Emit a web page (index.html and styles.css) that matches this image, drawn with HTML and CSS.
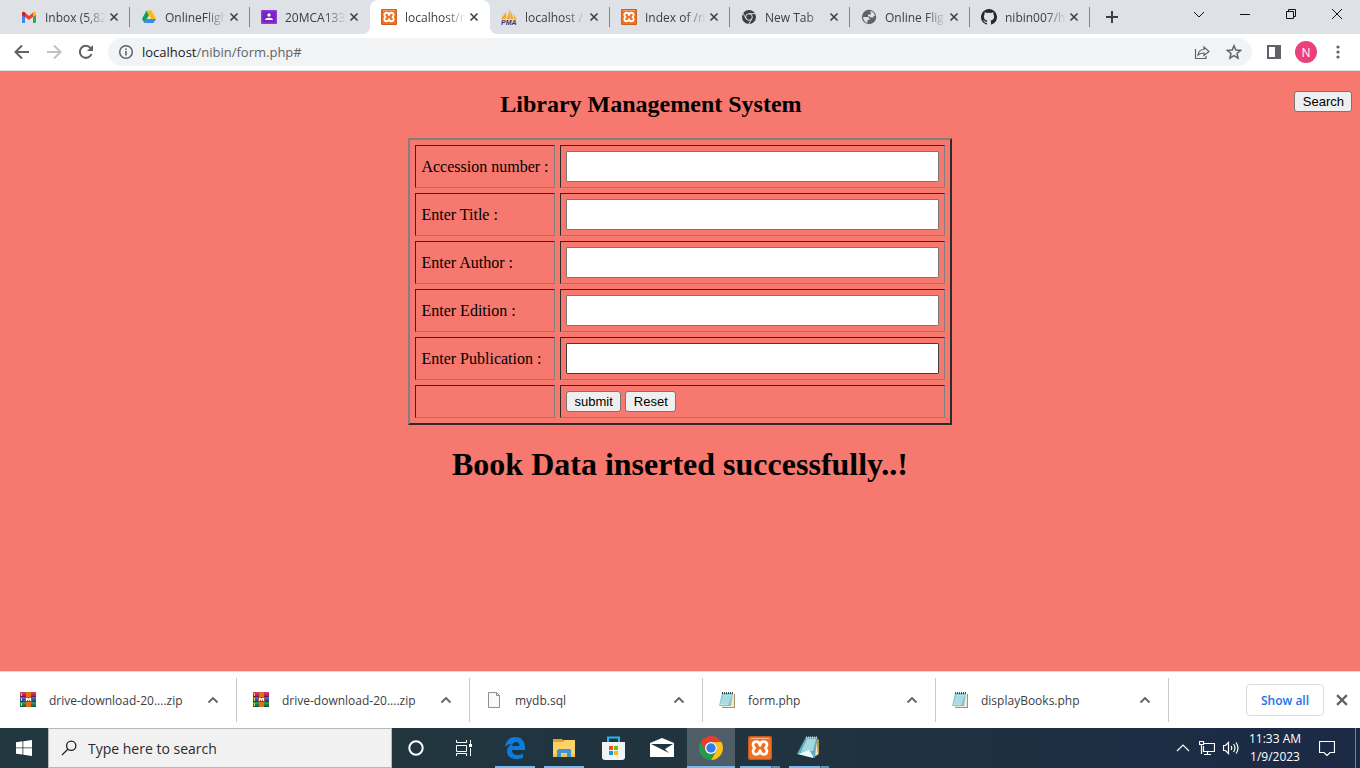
FILE: index.html
```html
<!DOCTYPE html>
<html lang="en">
<head>
<meta charset="utf-8">
<meta name="viewport" content="width=device-width, initial-scale=1">
<title>Library Management System</title>
<link rel="stylesheet" href="styles.css">
</head>
<body>
<svg class="sprite" aria-hidden="true">
  <symbol id="close" viewBox="0 0 10 10"><path d="M1.5 1.5l7 7m0-7l-7 7" fill="none" stroke="currentColor" stroke-width="1.6"/></symbol>
  <symbol id="up" viewBox="0 0 12 12"><path d="M1.5 8.500L6 4l4.500 4.500" fill="none" stroke="currentColor" stroke-width="1.800"/></symbol>
  <symbol id="xampp" viewBox="0 0 24 24">
    <rect width="24" height="24" rx="2" fill="#c9581a"/><rect x="1" y="1" width="22" height="22" rx="2" fill="#f07022"/><path d="M3 2h18v1H3z" fill="#f9b283"/>
    <path d="M12 9.300C11.500 4.500 5 4.500 5 8.800c0 1.400.7 2.400 1.700 3.200C5.700 12.800 5 13.800 5 15.200c0 4.300 6.500 4.300 7-.5.500 4.800 7 4.800 7 .5 0-1.400-.7-2.400-1.700-3.200 1-.8 1.700-1.800 1.700-3.200 0-4.300-6.500-4.300-7 .5z" fill="none" stroke="#fff" stroke-width="2.700" stroke-linejoin="round"/>
  </symbol>
  <symbol id="zip" viewBox="0 0 16 16">
    <path fill="#b8234f" d="M0 0h16v5H0z"/><path fill="#4745a8" d="M0 5h16v5H0z"/><path fill="#16803b" d="M0 10h16v5H0z"/>
    <path d="M0 1h16" stroke="#e0507a"/><path d="M0 6h16" stroke="#7777d0"/><path d="M0 11h16" stroke="#36b25b"/><path d="M0 4.500h16M0 9.500h16M0 14.500h16" stroke="#252540" stroke-width=".6"/>
    <path fill="#f1c644" d="M1 1h1v3H1zm0 5h1v3H1zm0 5h1v3H1z"/><path fill="#e46c1b" d="M6 0h5v15H6z"/>
    <path fill="#a63518" d="M5 5h7v5H5z"/><path d="M6.500 9V6.500h1L8.500 8l1-1.500h1V9" fill="none" stroke="#fff" stroke-width="1.300"/>
  </symbol>
  <symbol id="note" viewBox="0 0 16 16">
    <path fill="#a59262" d="M4 2h12v14H3z"/><path fill="#f0ead2" d="M4 2h11v13H3z"/><path fill="#81c5d5" d="M3 1h11l-2 13H0z"/><path fill="#b9e3ea" d="M4 3h9L9 13H1z"/>
    <path d="M3 5h10M3 7h9M2 9h10M2 11h10" stroke="#8fc5d2" stroke-width=".6"/><path d="M3.500 0v2m2-2v2m2-2v2m2-2v2m2-2v2m2-2v2" stroke="#333c40" stroke-width=".9"/>
  </symbol>
  <symbol id="chrome" viewBox="0 0 24 24">
    <path fill="#e43e31" d="M1.610 6A12 12 0 0 1 22.390 6H12a6 6 0 0 0-5.200 9z"/><path fill="#fbc116" d="M22.390 6A12 12 0 0 1 12 24l5.200-9A6 6 0 0 0 12 6z"/><path fill="#269b4b" d="M12 24A12 12 0 0 1 1.610 6l5.190 9a6 6 0 0 0 10.400 0z"/><circle cx="12" cy="12" r="6" fill="#fff"/><circle cx="12" cy="12" r="4.700" fill="#357be8"/>
  </symbol>
</svg>

<header class="browser">
  <nav class="tabs" aria-label="Browser tabs">
    <div class="tab"><svg class="favicon" viewBox="0 0 16 16"><path fill="#4285f4" d="M1 4l3 2v8H2a1 1 0 0 1-1-1z"/><path fill="#34a853" d="M12 6l3-2v9a1 1 0 0 1-1 1h-2z"/><path fill="#ea4335" d="M4 3.500L8 7l4-3.500V8l-4 3-4-3z"/><path fill="#c5221f" d="M1 4.500C1 2.500 3 2 4 3.500V8L1 6z"/><path fill="#fbbc04" d="M15 4.500c0-2-2-2.500-3-1V8l3-2z"/></svg><a class="tab-title" href="#">Inbox (5,82</a><button class="tab-close" aria-label="Close tab"><svg><use href="#close"/></svg></button></div>
    <div class="tab"><svg class="favicon" viewBox="0 0 16 16"><path fill="#15a05a" d="M5.500 1.500L1 10l2.500 4L8 6z"/><path fill="#fbbc04" d="M5.500 1.500h5L15 10h-5z"/><path fill="#4285f4" d="M5.500 10H15l-2.500 4h-9z"/></svg><a class="tab-title" href="#">OnlineFligh</a><button class="tab-close" aria-label="Close tab"><svg><use href="#close"/></svg></button></div>
    <div class="tab before-active"><svg class="favicon" viewBox="0 0 16 16"><rect y="1" width="16" height="14" rx="1" fill="#9334e6"/><rect x="1.500" y="2.500" width="13" height="11" fill="#7627bb"/><circle cx="8" cy="6" r="1.700" fill="#fff"/><path fill="#fff" d="M4 11c0-3 8-3 8 0z"/></svg><a class="tab-title" href="#">20MCA133</a><button class="tab-close" aria-label="Close tab"><svg><use href="#close"/></svg></button></div>
    <div class="tab active"><svg class="favicon"><use href="#xampp"/></svg><a class="tab-title" href="#" aria-current="page">localhost/n</a><button class="tab-close" aria-label="Close tab"><svg><use href="#close"/></svg></button></div>
    <div class="tab"><svg class="favicon" viewBox="0 0 16 16"><path fill="#f6a623" d="M5 3L0 10h5zM8.500 0L6 10l3 .5zM9.500 1v9l3 .5zM12 4l3.500 6-2 .5z"/><path fill="#f8c978" d="M6 5l-2 5h2z"/><text x="0" y="15.500" class="pma">PMA</text></svg><a class="tab-title" href="#">localhost /</a><button class="tab-close" aria-label="Close tab"><svg><use href="#close"/></svg></button></div>
    <div class="tab"><svg class="favicon"><use href="#xampp"/></svg><a class="tab-title" href="#">Index of /n</a><button class="tab-close" aria-label="Close tab"><svg><use href="#close"/></svg></button></div>
    <div class="tab"><svg class="favicon" viewBox="0 0 16 16"><circle cx="8" cy="8" r="7" fill="#3c4043"/><g fill="none" stroke="#dee1e6" stroke-width="1"><circle cx="8" cy="8" r="3.300"/><path d="M8 4.700h6.500M5.100 9.700L1.900 4.100M10.900 9.700L7.700 15"/></g></svg><a class="tab-title" href="#">New Tab</a><button class="tab-close" aria-label="Close tab"><svg><use href="#close"/></svg></button></div>
    <div class="tab"><svg class="favicon" viewBox="0 0 16 16"><circle cx="8" cy="8" r="7.200" fill="#5f6368"/><path fill="#dee1e6" d="M2 8h4.500q2 0 2 2v1H6.500v3Q2.500 13 2 8zM9 2.100q4 .6 5 5h-1.500v1.500H10q-1 0-1-1.200H7V5.500h2q1 0 1-1z"/></svg><a class="tab-title" href="#">Online Flig</a><button class="tab-close" aria-label="Close tab"><svg><use href="#close"/></svg></button></div>
    <div class="tab"><svg class="favicon" viewBox="0 0 16 16"><path fill="#24292f" d="M8 0a8 8 0 0 0-2.500 15.600c.4.100.5-.2.500-.4v-1.400c-2.200.5-2.700-1-2.700-1-.4-.9-.9-1.200-.9-1.200-.7-.5.100-.5.100-.5.800.1 1.200.8 1.200.8.700 1.300 1.900.9 2.300.7.100-.5.300-.9.500-1.100-1.800-.2-3.600-.9-3.600-4 0-.9.300-1.600.8-2.200-.1-.2-.4-1 .1-2.100 0 0 .7-.2 2.200.8a7.500 7.500 0 0 1 4 0c1.500-1 2.200-.8 2.200-.8.400 1.100.2 1.900.1 2.100.5.600.8 1.300.8 2.200 0 3.100-1.900 3.800-3.700 4 .3.200.6.700.6 1.500v2.200c0 .2.100.5.500.4A8 8 0 0 0 8 0z"/></svg><a class="tab-title" href="#">nibin007/h</a><button class="tab-close" aria-label="Close tab"><svg><use href="#close"/></svg></button></div>
    <button class="new-tab" aria-label="New tab"><svg viewBox="0 0 14 14"><path d="M7 1v12M1 7h12" stroke="#3c4043" stroke-width="2"/></svg></button>
    <div class="window-buttons">
      <button aria-label="Search tabs"><svg viewBox="0 0 12 12"><path d="M1 4l5 5 5-5"/></svg></button>
      <button aria-label="Minimize"><svg viewBox="0 0 12 12"><path d="M1 6.500h10"/></svg></button>
      <button aria-label="Restore"><svg viewBox="0 0 12 12"><path d="M1.500 3.500h7v7h-7zM3.500 3.500v-2h7v7h-2"/></svg></button>
      <button aria-label="Close window"><svg viewBox="0 0 12 12"><path d="M1 1l10 10M11 1L1 11"/></svg></button>
    </div>
  </nav>
  <div class="toolbar">
    <button class="tool" aria-label="Back"><svg viewBox="0 0 16 16"><path d="M15 8H2M8 1.500L1.500 8 8 14.500" fill="none" stroke="#5f6368" stroke-width="2"/></svg></button>
    <button class="tool" aria-label="Forward"><svg viewBox="0 0 16 16"><path d="M1 8h13M8 1.500L14.500 8 8 14.500" fill="none" stroke="#bdc1c6" stroke-width="2"/></svg></button>
    <button class="tool" aria-label="Reload"><svg viewBox="0 0 16 16"><path d="M13.500 10A6 6 0 1 1 12.500 4L14 5.500" fill="none" stroke="#5f6368" stroke-width="2"/><path fill="#5f6368" d="M15 1v6H9z"/></svg></button>
    <div class="address">
      <svg class="info" viewBox="0 0 16 16"><circle cx="8" cy="8" r="6.300" fill="none" stroke="#5f6368" stroke-width="1.500"/><path d="M8 7v4.500M8 4.500V6" stroke="#5f6368" stroke-width="1.600"/></svg>
      <a class="url" href="#"><span class="host">localhost</span>/nibin/form.php#</a>
      <button class="tool" aria-label="Share"><svg viewBox="0 0 16 16"><path d="M1.500 5v9.500H12V12M4 11c.5-4 2.500-5.500 6-5.500V3l5 4.500-5 4V9c-3 0-4.500.5-6 2z" fill="none" stroke="#5f6368" stroke-width="1.200"/></svg></button>
      <button class="tool" aria-label="Bookmark"><svg viewBox="0 0 16 16"><path d="M8 1.800l1.800 4.300 4.700.4-3.500 3 1.100 4.600L8 11.700l-4.100 2.400L5 9.500l-3.500-3 4.700-.4z" fill="none" stroke="#5f6368" stroke-width="1.500"/></svg></button>
    </div>
    <button class="tool" aria-label="Side panel"><svg viewBox="0 0 16 16"><path fill="#5f6368" fill-rule="evenodd" d="M1 1h14v14H1zm2 2v10h6V3z"/></svg></button>
    <button class="avatar" aria-label="Profile">N</button>
    <button class="tool" aria-label="Menu"><svg viewBox="0 0 16 16"><g fill="#5f6368"><circle cx="8" cy="3" r="1.600"/><circle cx="8" cy="8" r="1.600"/><circle cx="8" cy="13" r="1.600"/></g></svg></button>
  </div>
</header>

<main class="page">
  <div class="heading">
    <h2>Library Management System</h2>
    <button class="btn" type="button">Search</button>
  </div>
  <form>
    <table class="book">
      <tr><td><label for="accession">Accession number :</label></td><td><input class="field" type="text" id="accession"></td></tr>
      <tr><td><label for="title">Enter Title :</label></td><td><input class="field" type="text" id="title"></td></tr>
      <tr><td><label for="author">Enter Author :</label></td><td><input class="field" type="text" id="author"></td></tr>
      <tr><td><label for="edition">Enter Edition :</label></td><td><input class="field" type="text" id="edition"></td></tr>
      <tr><td><label for="publication">Enter Publication :</label></td><td><input class="field field-dark" type="text" id="publication"></td></tr>
      <tr><td></td><td><div class="actions"><button class="btn" type="submit">submit</button><button class="btn" type="reset">Reset</button></div></td></tr>
    </table>
  </form>
  <h1>Book Data inserted successfully..!</h1>
</main>

<section class="downloads" aria-label="Downloads">
  <div class="download"><svg class="file"><use href="#zip"/></svg><a href="#">drive-download-20....zip</a><button aria-label="Options"><svg><use href="#up"/></svg></button></div>
  <div class="download"><svg class="file"><use href="#zip"/></svg><a href="#">drive-download-20....zip</a><button aria-label="Options"><svg><use href="#up"/></svg></button></div>
  <div class="download"><svg class="file" viewBox="0 0 16 16"><path d="M2.500.5h8l3 3v12h-11z" fill="#f8f9f9" stroke="#8c8f8f"/><path d="M10.500.5v3h3" fill="none" stroke="#8c8f8f"/></svg><a href="#">mydb.sql</a><button aria-label="Options"><svg><use href="#up"/></svg></button></div>
  <div class="download"><svg class="file"><use href="#note"/></svg><a href="#">form.php</a><button aria-label="Options"><svg><use href="#up"/></svg></button></div>
  <div class="download"><svg class="file"><use href="#note"/></svg><a href="#">displayBooks.php</a><button aria-label="Options"><svg><use href="#up"/></svg></button></div>
  <button class="show-all">Show all</button>
  <button class="hide" aria-label="Close downloads"><svg><use href="#close"/></svg></button>
</section>

<footer class="taskbar">
  <button class="task" aria-label="Start"><svg class="icon-small" viewBox="0 0 16 16"><path fill="#fff" d="M0 2.200l6.500-.9v6.200H0zM7.300 1.200L16 0v7.500H7.300zM0 8.300h6.500v6.200L0 13.700zM7.300 8.300H16V16l-8.700-1.200z"/></svg></button>
  <label class="search"><svg viewBox="0 0 18 18"><circle cx="11.500" cy="6.500" r="5.200"/><path d="M7.700 10.300L1 17"/></svg><input type="text" placeholder="Type here to search" aria-label="Type here to search"></label>
  <button class="task" aria-label="Cortana"><svg class="icon-small" viewBox="0 0 16 16"><circle cx="8" cy="8" r="6.700" fill="none" stroke="#fff" stroke-width="2"/></svg></button>
  <button class="task" aria-label="Task view"><svg class="icon-small" viewBox="0 0 16 16"><path d="M.5 0v2.500h10V0M.5 5.500h10v6H.5zM.5 16v-2.500h10V16M14.500 0v4M14.500 8v8" fill="none" stroke="#fff"/><path fill="#fff" d="M13 4h3v3h-3z"/></svg></button>
  <div class="apps">
    <button class="task open" aria-label="Edge"><svg viewBox="0 0 24 24"><path fill="#0b7bdc" d="M2 11C3 4 7 1 12 1c7 0 10 5 10 10v3H9c0 6 7 6 11 3.500v4.500C11 25 4 22 4 15c0-3 2-5.500 5-7-5 0-7 3-7 3zm7-1h7.500C16.500 4.500 9.500 5 9 10z"/></svg></button>
    <button class="task open" aria-label="File Explorer"><svg viewBox="0 0 24 24"><path fill="#e8a317" d="M1 3h9l2 2v5H1z"/><path fill="#fbd267" d="M1 6h10l1-2h11v17H1z"/><path fill="#f5c343" d="M1 18h22v3H1z"/><path fill="#3d94db" d="M5 21v-7l2-1h11l1 1v7h-4v-4H9v4z"/></svg></button>
    <button class="task" aria-label="Store"><svg viewBox="0 0 24 24"><path d="M7 6V1.500h11V6" fill="none" stroke="#28b5ec" stroke-width="2"/><path fill="#f2f3f4" d="M1 6h23v15q0 3-3 3H4q-3 0-3-3z"/><path fill="#f25022" d="M8 10h4v4H8z"/><path fill="#7fba00" d="M13 10h4v4h-4z"/><path fill="#00a4ef" d="M8 15h4v4H8z"/><path fill="#ffb900" d="M13 15h4v4h-4z"/></svg></button>
    <button class="task" aria-label="Mail"><svg viewBox="0 0 24 24"><path fill="#fff" d="M0 7l12-5 12 5v14H0z"/><path fill="#21343e" d="M1 8h22l-8 5 4 4-8-4z"/></svg></button>
    <button class="task current" aria-label="Chrome"><svg><use href="#chrome"/></svg></button>
    <button class="task open multi" aria-label="XAMPP"><svg><use href="#xampp"/></svg></button>
    <button class="task open multi" aria-label="Notepad"><svg viewBox="0 0 24 24"><path fill="#b89043" d="M20 2l2 2v14l-3 2z"/><path fill="#e9e4ce" d="M19 2l2 16-4 3z"/><path fill="#62acbc" d="M9 1h11l-2 21L0 18z"/><path fill="#a2d9e1" d="M10 3h9l-3 12-12 1z"/><path fill="#effafa" d="M1 18l11-4 4 6v2z"/><path d="M9 1.500h11" stroke="#c9d6d9" stroke-width="2" stroke-dasharray="1 1"/></svg></button>
  </div>
  <div class="tray">
    <button class="tray-icon" aria-label="Hidden icons"><svg viewBox="0 0 16 16"><path d="M2 11l6-6 6 6"/></svg></button>
    <button class="tray-icon" aria-label="Network"><svg viewBox="0 0 16 16"><path d="M5 3.500h10.500v8H4.500V6M8.500 11.500v3M5 14.500h7M.5 1.500h4v3h-4zM2.500 5v9"/></svg></button>
    <button class="tray-icon" aria-label="Volume"><svg viewBox="0 0 16 16"><path d="M.5 5.500h2l3-3v11l-3-3h-2zM8 6q1.500 2 0 4M10.500 4q3 4 0 8M13 2.500q4 5.500 0 11"/></svg></button>
    <time class="clock" datetime="2023-01-09T11:33"><span>11:33 AM</span><span>1/9/2023</span></time>
    <button class="notice" aria-label="Notifications"><svg viewBox="0 0 16 16"><path d="M.5 1.500h15v11H11l-3 3-3-3H.5z"/></svg></button>
    <button class="desktop" aria-label="Show desktop"></button>
  </div>
</footer>
</body>
</html>
```
FILE: styles.css
```css
* { box-sizing: border-box; }
body {
  margin: 0;
  min-height: 100vh;
  display: flex;
  flex-direction: column;
  background: #f6786e;
  font-family: "Liberation Serif", serif;
}
.sprite { display: none; }
button { font: inherit; color: inherit; border: 0; padding: 0; background: none; }
a { color: inherit; text-decoration: none; }
svg { display: block; flex: none; }
.browser, .downloads, .taskbar { font-family: "Open Sans", sans-serif; }

.tabs { display: flex; height: 34px; padding-left: 10px; background: #dee1e6; color: #3c4043; font-size: 12px; }
.tab { position: relative; flex: 0 1 120px; min-width: 0; display: flex; align-items: center; padding: 0 11px; }
.tab::after { content: ""; position: absolute; right: 0; top: 7px; width: 1px; height: 20px; background: #80868b; }
.tab.before-active::after { display: none; }
.tab.active { background: #fff; border-radius: 8px 8px 0 0; }
.tab.active::before, .tab.active::after {
  content: ""; position: absolute; top: auto; bottom: 0; width: 8px; height: 8px;
  background: radial-gradient(circle at 0 0, #dee1e6 8px, #fff 8px);
}
.tab.active::before { left: -8px; }
.tab.active::after { right: -8px; background: radial-gradient(circle at 100% 0, #dee1e6 8px, #fff 8px); }
.favicon { width: 16px; height: 16px; }
.pma { font: italic bold 7px "Liberation Sans", sans-serif; fill: #37395c; }
.tab-title {
  flex: 1; min-width: 0; margin: 0 3px 0 8px; overflow: hidden; white-space: nowrap;
  -webkit-mask-image: linear-gradient(to left, transparent, #000 20px);
  mask-image: linear-gradient(to left, transparent, #000 20px);
}
.tab-close svg { width: 10px; height: 10px; }
.new-tab { width: 44px; display: grid; place-items: center; }
.new-tab svg { width: 14px; height: 14px; }
.window-buttons { margin-left: auto; display: flex; color: #111; }
.window-buttons button { width: 46px; height: 28px; display: grid; place-items: center; }
.window-buttons svg { width: 12px; height: 12px; fill: none; stroke: currentColor; stroke-width: 1; }

.toolbar { display: flex; align-items: center; height: 37px; padding: 0 6px; background: #fff; border-bottom: 1px solid #dadce0; }
.tool { width: 32px; height: 28px; display: grid; place-items: center; }
.tool svg { width: 16px; height: 16px; }
.address { flex: 1; display: flex; align-items: center; height: 28px; margin: 0 6px; padding: 0 2px 0 10px; border-radius: 14px; background: #f1f3f4; }
.info { width: 16px; height: 16px; }
.url { flex: 1; margin-left: 8px; font-size: 13px; color: #5f6368; }
.host { color: #202124; }
.avatar { width: 22px; height: 22px; margin: 0 5px; border-radius: 50%; background: #ec407a; color: #fff; font-size: 12px; }

.page { flex: 1; padding: 20px 8px; }
.heading { display: flex; align-items: flex-start; margin-bottom: 20px; }
h2 { flex: 1; margin: 0; font-size: 24px; line-height: 27px; text-align: center; }
h1 { margin: 21px 0 0; font-size: 32px; line-height: 37px; text-align: center; }
.btn {
  height: 21px; padding: 0 7px 0 8px; border: 1px solid #767676; border-radius: 3px;
  background: #efefef; color: #000; font: 13px/19px "Liberation Sans", sans-serif;
}
.book { margin: 0 auto; border: 2px solid; border-color: #808080 #2c2c2c #2c2c2c #808080; border-spacing: 5px; }
.book td { padding: 5px; border: 1px solid; border-color: #2c2c2c #808080 #808080 #2c2c2c; font-size: 16px; }
.field { display: block; width: 373px; height: 31px; padding: 1px 4px; border: 1px solid #767676; border-radius: 1px; background: #fff; }
.field-dark { border-color: #404040; }
.actions { display: flex; gap: 4px; }

.downloads { display: flex; align-items: center; height: 57px; padding: 0 11px 0 4px; border-top: 1px solid #dadce0; background: #fff; color: #3c4043; font-size: 12px; }
.download { flex: 0 1 233px; min-width: 0; height: 44px; display: flex; align-items: center; padding: 0 17px 0 16px; border-right: 1px solid #c8cacd; }
.download a { flex: 1; margin-left: 13px; overflow: hidden; white-space: nowrap; }
.download button { color: #5f6368; }
.download button svg { width: 12px; height: 12px; }
.file { width: 16px; height: 16px; }
.show-all { width: 78px; height: 32px; margin-left: auto; border: 1px solid #dadce0; border-radius: 4px; color: #1a73e8; font-weight: 600; }
.hide { margin-left: 11px; color: #5f6368; }
.hide svg { width: 14px; height: 14px; }

.taskbar { display: flex; height: 40px; background: linear-gradient(to right, #223840, #20333f 60%, #1b2946); color: #fff; }
.task { position: relative; width: 48px; height: 40px; display: grid; place-items: center; }
.task svg { width: 24px; height: 24px; }
.task .icon-small { width: 16px; height: 16px; }
.search { flex: 0 1 344px; display: flex; align-items: center; padding: 0 12px; border: 1px solid #b9b9b9; background: #f1f1f1; }
.search svg { width: 16px; height: 16px; fill: none; stroke: #222; stroke-width: 1.5; }
.search input { flex: 1; min-width: 0; margin-left: 11px; padding: 0; border: 0; outline: 0; background: none; font: 14px "Open Sans", sans-serif; }
.search input::placeholder { color: #2b2b2b; opacity: 1; }
.apps { display: flex; gap: 1px; margin-left: 3px; }
.open::after, .current::after { content: ""; position: absolute; left: 4px; right: 4px; bottom: 0; height: 2px; background: #76b9ed; }
.current { background: #4e5d66; }
.current::after { left: 0; right: 0; }
.multi::after { background: linear-gradient(to right, #76b9ed 31px, #44657d 31px, #44657d 32px, #5b91ba 32px); }
.tray { margin-left: auto; display: flex; align-items: center; }
.tray-icon { width: 24px; height: 40px; display: grid; place-items: center; }
.tray svg { width: 16px; height: 16px; fill: none; stroke: #fff; stroke-width: 1.2; }
.clock { width: 64px; display: flex; flex-direction: column; text-align: center; font-size: 12px; line-height: 18px; }
.notice { width: 40px; height: 40px; display: grid; place-items: center; }
.desktop { width: 5px; height: 40px; margin-left: 8px; border-left: 1px solid #76808f; }
```
